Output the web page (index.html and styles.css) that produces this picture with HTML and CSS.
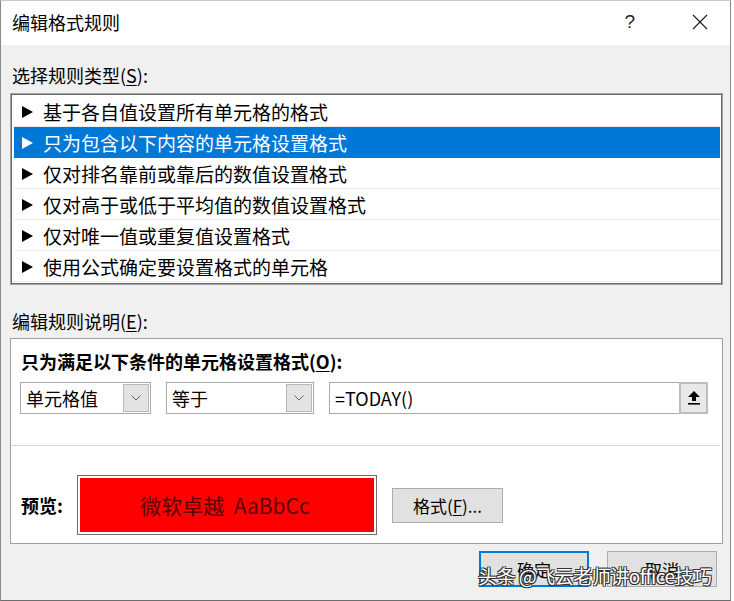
FILE: index.html
```html
<!DOCTYPE html>
<html lang="zh-CN">
<head>
  <meta charset="UTF-8" />
  <title>编辑格式规则</title>
  <link rel="stylesheet" href="styles.css">
</head>
<body>
  <div class="window">

    <!-- title bar -->
    <div class="titlebar">
      <span class="title">编辑格式规则</span>
      <span class="help">?</span>
      <span class="close">
        <svg width="16" height="16" viewBox="0 0 16 16"><path d="M1 1 L15 15 M15 1 L1 15" stroke="#1a1a1a" stroke-width="1.1" fill="none"/></svg>
      </span>
    </div>

    <div class="content">
      <div class="label first">选择规则类型(<u>S</u>):</div>
      <div class="rule-list">
        <div class="rule"><span class="tri"></span>基于各自值设置所有单元格的格式</div>
        <div class="rule selected"><span class="tri"></span>只为包含以下内容的单元格设置格式</div>
        <div class="rule"><span class="tri"></span>仅对排名靠前或靠后的数值设置格式</div>
        <div class="rule"><span class="tri"></span>仅对高于或低于平均值的数值设置格式</div>
        <div class="rule"><span class="tri"></span>仅对唯一值或重复值设置格式</div>
        <div class="rule"><span class="tri"></span>使用公式确定要设置格式的单元格</div>
      </div>

      <div class="label second">编辑规则说明(<u>E</u>):</div>
      <div class="panel">
        <div class="panel-head">只为满足以下条件的单元格设置格式(<u>O</u>):</div>
        <div class="cond-row">
          <div class="combo combo-a">
            <span class="combo-text">单元格值</span>
            <span class="drop">
              <svg width="10" height="6" viewBox="0 0 10 6"><path d="M0.5 0.5 L5 5 L9.5 0.5" stroke="#606060" stroke-width="1" fill="none"/></svg>
            </span>
          </div>
          <div class="combo combo-b">
            <span class="combo-text">等于</span>
            <span class="drop">
              <svg width="10" height="6" viewBox="0 0 10 6"><path d="M0.5 0.5 L5 5 L9.5 0.5" stroke="#606060" stroke-width="1" fill="none"/></svg>
            </span>
          </div>
          <div class="formula">
            <span class="formula-text">=TODAY()</span>
            <span class="pick">
              <svg width="14" height="16" viewBox="0 0 14 16"><path d="M7 1 L13 7 L9 7 L9 11 L5 11 L5 7 L1 7 Z" fill="#000"/><rect x="1" y="13" width="12" height="1.6" fill="#000"/></svg>
            </span>
          </div>
        </div>
        <div class="divider"></div>
        <div class="preview-row">
          <span class="preview-label">预览:</span>
          <div class="preview-box">
            <div class="preview-fill">微软卓越&nbsp; AaBbCc</div>
          </div>
          <button class="btn format-btn">格式(<u>F</u>)...</button>
        </div>
      </div>

      <div class="footer">
        <button class="btn ok">确定</button>
        <button class="btn cancel">取消</button>
      </div>
    </div>

    <!-- watermark laid over the buttons, as in the screenshot -->
    <div class="watermark">头条 @飞云老师讲office技巧</div>
  </div>
</body>
</html>
```

FILE: styles.css
```css
* {
  box-sizing: border-box;
  margin: 0;
  padding: 0;
}
body {
  width: 734px;
  height: 601px;
  background: #fff;
  font-family: "Noto Sans CJK SC", "Noto Sans", sans-serif;
  color: #000;
  overflow: hidden;
}
u {
  text-decoration: underline;
  text-underline-offset: 2px;
}
.window {
  position: relative;
  width: 731px;
  height: 601px;
  border-left: 1px solid #8a8a8a;
  border-right: 1px solid #8a8a8a;
  border-bottom: 1px solid #6e6e6e;
  border-top: 1px solid #c8c8c8;
  background: #f0f0f0;
}
.titlebar {
  height: 44px;
  background: #fff;
  display: flex;
  align-items: center;
  padding-left: 11px;
}
.title {
  font-size: 18px;
  flex: 1;
  line-height: 24px;
  margin-top: -2px;
}
.help {
  font-size: 19px;
  font-weight: 300;
  color: #222;
  font-family: "Liberation Sans", sans-serif;
  margin-right: 57px;
  margin-top: -2px;
}
.close {
  display: flex;
  margin-right: 22px;
  margin-top: -2px;
}
.content {
  padding-left: 9px;
}
.label {
  font-size: 18px;
  line-height: 24px;
  padding-left: 2px;
}
.label.first {
  padding-top: 18px;
  margin-bottom: 6px;
}
.label.second {
  margin-top: 24px;
  margin-bottom: 5px;
}
.rule-list {
  width: 713px;
  background: #fff;
  border: 1px solid #a3a3a3;
  box-shadow: inset 0 0 0 1px #6a6a6a;
  padding: 2px 2px 2px 3px;
}
.rule {
  height: 31px;
  display: flex;
  align-items: center;
  padding-left: 8px;
  font-size: 19px;
  line-height: 31px;
  border-bottom: 1px solid #ececec;
  white-space: nowrap;
}
.rule .tri {
  width: 0;
  height: 0;
  border-top: 6px solid transparent;
  border-bottom: 6px solid transparent;
  border-left: 11px solid #000;
  margin-right: 10px;
  margin-top: 1px;
}
.rule.selected {
  background: #0078d7;
  color: #fff;
  border-bottom-color: #0078d7;
}
.rule.selected .tri {
  border-left-color: #fff;
}
.panel {
  width: 713px;
  height: 206px;
  background: #fff;
  border: 1px solid #a0a0a0;
  padding-top: 10px;
}
.panel-head {
  font-size: 18px;
  font-weight: bold;
  line-height: 24px;
  padding-left: 10px;
}
.cond-row {
  display: flex;
  gap: 15px;
  margin-top: 9px;
  padding-left: 9px;
}
.combo,
.formula {
  height: 32px;
  border: 1px solid #a9a9a9;
  background: #fff;
  display: flex;
  align-items: center;
  padding: 1px;
}
.combo-a {
  width: 131px;
}
.combo-b {
  width: 148px;
}
.combo-text,
.formula-text {
  flex: 1;
  font-size: 18px;
  line-height: 28px;
  padding-left: 4px;
}
.formula-text {
  padding-left: 5px;
}
.drop {
  width: 26px;
  height: 28px;
  background: #e3e3e3;
  border: 1px solid #b9b9b9;
  display: flex;
  align-items: center;
  justify-content: center;
}
.formula {
  width: 379px;
  padding: 0;
}
.pick {
  width: 29px;
  height: 32px;
  margin: -1px -1px -1px 0;
  background: #e8e8e8;
  border: 2px solid #bdbdbd;
  display: flex;
  align-items: center;
  justify-content: center;
}
.divider {
  height: 1px;
  background: #d6d6d6;
  margin-top: 31px;
  width: 709px;
}
.preview-row {
  display: flex;
  align-items: center;
  margin-top: 29px;
  padding-left: 10px;
}
.preview-label {
  font-size: 18px;
  font-weight: bold;
  line-height: 24px;
  width: 56px;
}
.preview-box {
  width: 300px;
  height: 60px;
  border: 1px solid #6d6d6d;
  padding: 2px;
  background: #fff;
}
.preview-fill {
  height: 100%;
  background: #ff0000;
  color: #5a0000;
  font-size: 21px;
  display: flex;
  align-items: center;
  justify-content: center;
  padding-right: 4px;
}
.btn {
  font-family: "Noto Sans CJK SC", "Noto Sans", sans-serif;
  font-size: 17px;
  background: #e1e1e1;
  border: 1px solid #adadad;
  color: #000;
  height: 36px;
  width: 110px;
}
.format-btn {
  margin-left: 15px;
  height: 35px;
  width: 111px;
}
.footer {
  display: flex;
  justify-content: flex-end;
  gap: 18px;
  padding-right: 13px;
  margin-top: 7px;
}
.btn.ok {
  border: 2px solid #0078d7;
}
.watermark {
  position: absolute;
  left: 477px;
  top: 561px;
  font-size: 19px;
  line-height: 28px;
  color: #fff;
  letter-spacing: -0.5px;
  white-space: nowrap;
  text-shadow: 1px 1px 0 #333, -1px -1px 0 #333, 1px -1px 0 #333, -1px 1px 0 #333;
}
```
